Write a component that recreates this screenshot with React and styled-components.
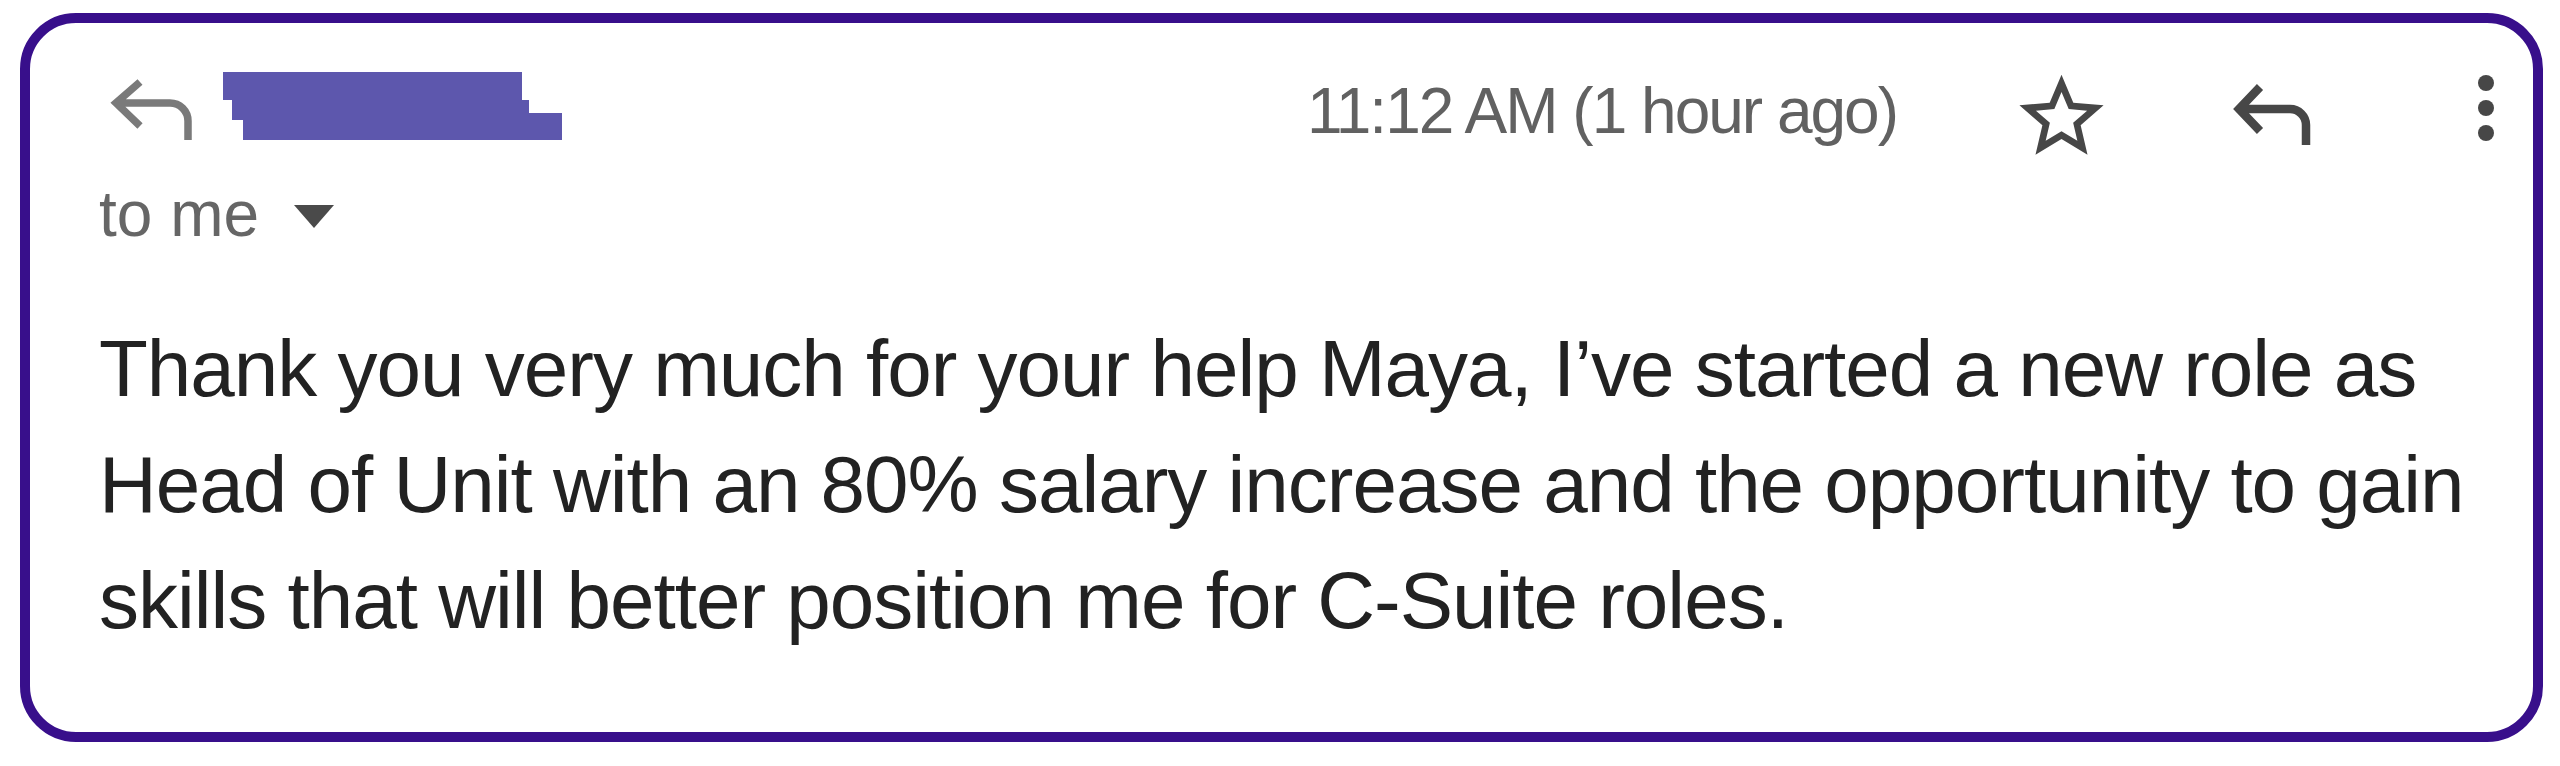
import React from "react";
import styled, { createGlobalStyle } from "styled-components";

const GlobalStyle = createGlobalStyle`
  html, body {
    margin: 0;
    padding: 0;
    background: #ffffff;
  }
  body {
    font-family: "Liberation Sans", Arial, Helvetica, sans-serif;
  }
`;

const Page = styled.div`
  box-sizing: border-box;
  width: 2560px;
  height: 766px;
  padding: 13px 17px 24px 20px;
`;

const Card = styled.div`
  box-sizing: border-box;
  height: 100%;
  border: 10px solid #380f8b;
  border-radius: 56px;
  background: #ffffff;
  padding: 35px 37px 0 69px;
`;

const Header = styled.div`
  display: flex;
  align-items: center;
  height: 100px;
`;

const Spacer = styled.div`
  flex: 1;
`;

const Icon = styled.svg`
  display: block;
  flex: none;
  margin-left: ${(p) => p.$gap || 0}px;
`;

const Time = styled.span`
  margin-top: 6px;
  font-size: 64px;
  line-height: 64px;
  letter-spacing: -2px;
  color: #616161;
  white-space: nowrap;
`;

const Recipient = styled.div`
  display: flex;
  align-items: center;
  margin-top: 24px;
  height: 64px;
  font-size: 64px;
  line-height: 64px;
  color: #666666;
`;

const Caret = styled.span`
  width: 0;
  height: 0;
  margin-left: 35px;
  margin-top: 5px;
  border-left: 20px solid transparent;
  border-right: 20px solid transparent;
  border-top: 23px solid #4a4a4a;
`;

const Body = styled.p`
  margin: 65px 0 0;
  font-size: 80px;
  line-height: 116px;
  letter-spacing: -1px;
  color: #222222;
  white-space: nowrap;
`;

function ReplyIcon({ color, stroke, width, height, d, gap }) {
  return (
    <Icon width={width} height={height} viewBox={`0 0 ${width} ${height}`} $gap={gap}>
      <path d={d} fill="none" stroke={color} strokeWidth={stroke} strokeLinejoin="miter" />
    </Icon>
  );
}

export default function App() {
  return (
    <Page>
      <GlobalStyle />
      <Card>
        <Header>
          <ReplyIcon
            width={110}
            height={70}
            color="#7a7a7a"
            stroke={7.5}
            d="M41 9 L17 30 L41 53 M17 30 H71 A18 18 0 0 1 89 48 V67"
          />
          <Icon width={340} height={72} viewBox="0 0 340 72" $gap={14}>
            <polygon
              points="0,0 299,0 299,28 306,28 306,41 339,41 339,68 20,68 20,48 9,48 9,28 0,28"
              fill="#5d57ad"
            />
          </Icon>
          <Spacer />
          <Time>11:12 AM (1 hour ago)</Time>
          <Icon width={101} height={101} viewBox="0 -2 24 24" $gap={114}>
            <path
              d="M22 9.24l-7.19-.62L12 2 9.19 8.63 2 9.24l5.46 4.73L5.82 21 12 17.27 18.18 21l-1.63-7.03L22 9.24zM12 15.4l-3.76 2.27 1-4.28-3.32-2.88 4.38-.38L12 6.1l1.71 4.04 4.38.38-3.32 2.88 1 4.28L12 15.4z"
              fill="#474747"
            />
          </Icon>
          <ReplyIcon
            width={80}
            height={80}
            color="#474747"
            stroke={8.5}
            gap={121}
            d="M27 19 L6 41 L27 63 M6 41 H57 A16 16 0 0 1 73 57 V77"
          />
          <Icon width={20} height={74} viewBox="0 0 20 74" $gap={163}>
            <circle cx="10" cy="12" r="8" fill="#474747" />
            <circle cx="10" cy="37" r="8" fill="#474747" />
            <circle cx="10" cy="62" r="8" fill="#474747" />
          </Icon>
        </Header>
        <Recipient>
          to me
          <Caret />
        </Recipient>
        <Body>
          Thank you very much for your help Maya, I’ve started a new role as
          <br />
          Head of Unit with an 80% salary increase and the opportunity to gain
          <br />
          skills that will better position me for C-Suite roles.
        </Body>
      </Card>
    </Page>
  );
}
